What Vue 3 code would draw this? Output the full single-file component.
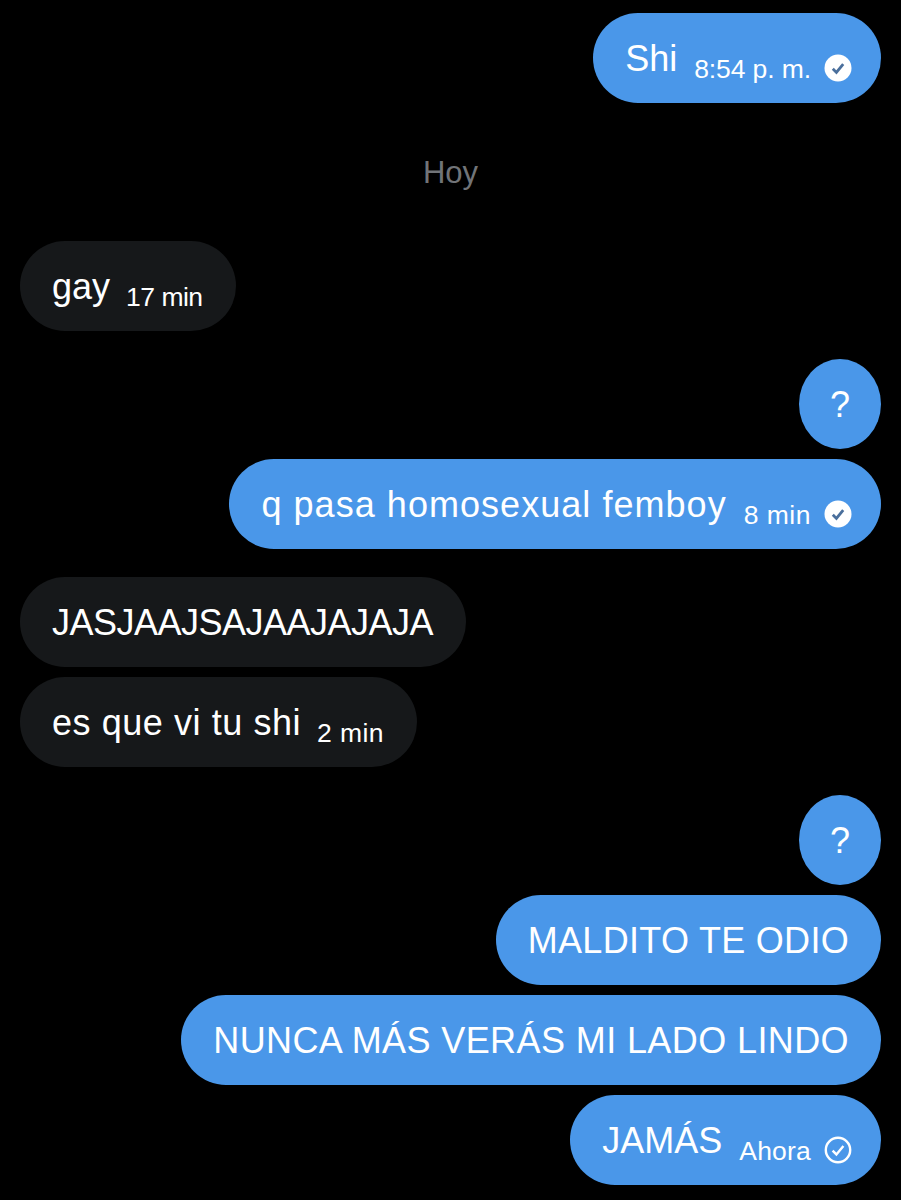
<script setup>
// track / timeTrack: letter-spacing in px, the reference font sets each line a bit differently
const messages = [
  { id: 1, mine: true, text: 'Shi', time: '8:54 p. m.', timeTrack: -0.1, check: 'read', gap: 'none' },
  { id: 2, day: 'Hoy' },
  { id: 3, mine: false, text: 'gay', time: '17 min', timeTrack: -0.5, gap: 'none' },
  { id: 4, mine: true, text: '?', round: true, gap: 'big' },
  { id: 5, mine: true, text: 'q pasa homosexual femboy', track: 1.04, time: '8 min', timeTrack: 0.5, check: 'read' },
  { id: 6, mine: false, text: 'JASJAAJSAJAAJAJAJA', track: -0.5, gap: 'big' },
  { id: 7, mine: false, text: 'es que vi tu shi', track: 0.56, time: '2 min', timeTrack: 0.4 },
  { id: 8, mine: true, text: '?', round: true, gap: 'big' },
  { id: 9, mine: true, text: 'MALDITO TE ODIO', track: 0.3 },
  { id: 10, mine: true, text: 'NUNCA MÁS VERÁS MI LADO LINDO', track: 0.4 },
  { id: 11, mine: true, text: 'JAMÁS', time: 'Ahora', timeTrack: 0.2, check: 'sent' },
]
</script>

<template>
  <div class="chat">
    <template v-for="m in messages" :key="m.id">
      <div v-if="m.day" class="day">{{ m.day }}</div>
      <div
        v-else
        class="bubble"
        :class="{ mine: m.mine, theirs: !m.mine, round: m.round, big: m.gap === 'big', flush: m.gap === 'none', checked: m.check }"
      >
        <span class="text" :style="{ letterSpacing: (m.track || 0) + 'px' }">{{ m.text }}</span>
        <span v-if="m.time" class="time" :style="{ letterSpacing: (m.timeTrack || 0) + 'px' }">{{ m.time }}</span>
        <svg v-if="m.check === 'read'" class="check" viewBox="0 0 28 28">
          <circle cx="14" cy="14" r="13.5" fill="#fff" />
          <path d="M8.8 14.8l3.6 3.6 6.8-8.2" fill="none" stroke="#4a6f9c" stroke-width="2.8" />
        </svg>
        <svg v-if="m.check === 'sent'" class="check" viewBox="0 0 28 28">
          <circle cx="14" cy="14" r="12.2" fill="none" stroke="#fff" stroke-width="2.4" />
          <path d="M8.6 14.6l3.8 3.8 7-8.4" fill="none" stroke="#fff" stroke-width="2.4" />
        </svg>
      </div>
    </template>
  </div>
</template>

<style>
html, body {
  background: #000;
}
</style>

<style scoped>
.chat {
  display: flex;
  flex-direction: column;
  padding: 13px 20px 15px;
  height: 1200px;
  box-sizing: border-box;
  background: #000;
  font-family: "Liberation Sans", Arial, sans-serif;
}

.day {
  height: 138px;
  display: flex;
  align-items: center;
  justify-content: center;
  padding-top: 2px;
  box-sizing: border-box;
  color: #717478;
  font-size: 31px;
}

.bubble {
  display: flex;
  align-items: center;
  height: 90px;
  margin-top: 10px;
  padding: 0 32px;
  border-radius: 45px;
  color: #fff;
  width: fit-content;
  white-space: nowrap;
  box-sizing: border-box;
}

.checked {
  padding-right: 29px;
}

.big {
  margin-top: 28px;
}

.flush {
  margin-top: 0;
}

.mine {
  align-self: flex-end;
  background: #4a97e9;
}

.theirs {
  align-self: flex-start;
  background: #16181a;
  padding-right: 33px;
}

.round {
  width: 82px;
  padding: 0;
  justify-content: center;
  border-radius: 50%;
}

.text {
  font-size: 36px;
  line-height: 40px;
  margin-top: 1px;
}

.time {
  font-size: 26.5px;
  margin-left: 16px;
  margin-top: 22px;
}

.checked .time {
  margin-left: 17px;
}

.check {
  width: 28px;
  height: 28px;
  margin-left: 13px;
  margin-top: 20px;
}
</style>
